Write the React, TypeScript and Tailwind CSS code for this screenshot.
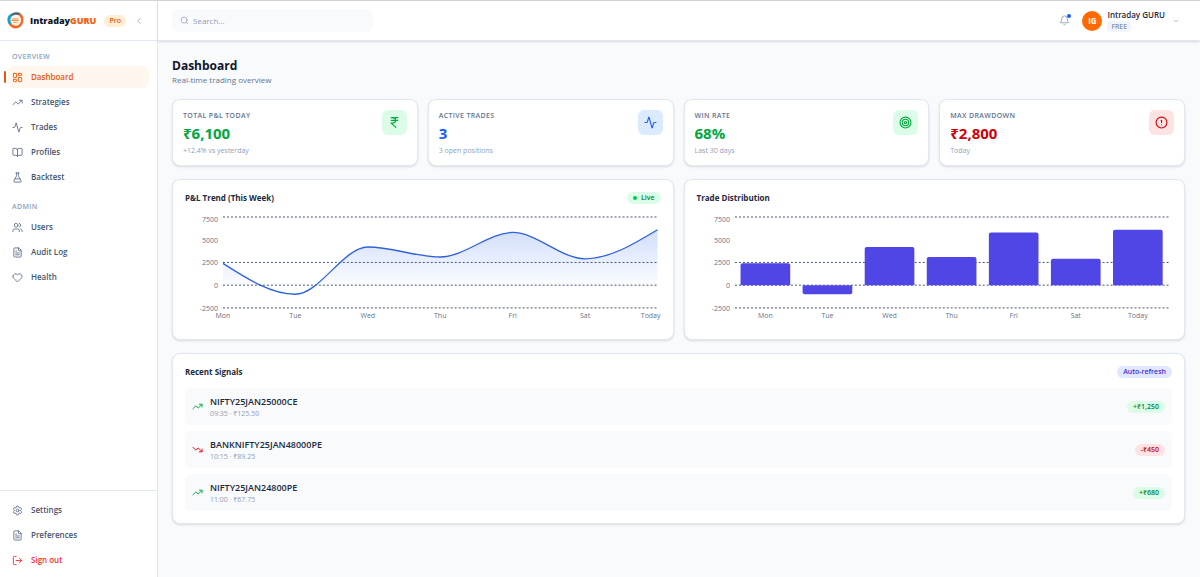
import { useId } from "react";
import type { LucideIcon } from "lucide-react";
import {
  Activity,
  Bell,
  BookOpen,
  ChevronDown,
  ChevronLeft,
  CircleAlert,
  FileText,
  FlaskConical,
  Heart,
  IndianRupee,
  LayoutDashboard,
  LogOut,
  Search,
  Settings,
  Target,
  TrendingDown,
  TrendingUp,
  Users,
} from "lucide-react";

type NavItem = { label: string; icon: LucideIcon; active?: boolean; danger?: boolean };

const overview: NavItem[] = [
  { label: "Dashboard", icon: LayoutDashboard, active: true },
  { label: "Strategies", icon: TrendingUp },
  { label: "Trades", icon: Activity },
  { label: "Profiles", icon: BookOpen },
  { label: "Backtest", icon: FlaskConical },
];

const admin: NavItem[] = [
  { label: "Users", icon: Users },
  { label: "Audit Log", icon: FileText },
  { label: "Health", icon: Heart },
];

const account: NavItem[] = [
  { label: "Settings", icon: Settings },
  { label: "Preferences", icon: FileText },
  { label: "Sign out", icon: LogOut, danger: true },
];

const stats = [
  { label: "TOTAL P&L TODAY", value: "₹6,100", note: "+12.4% vs yesterday", icon: IndianRupee, color: "text-green-600", box: "bg-green-100 text-green-600" },
  { label: "ACTIVE TRADES", value: "3", note: "3 open positions", icon: Activity, color: "text-blue-600", box: "bg-blue-100 text-blue-600" },
  { label: "WIN RATE", value: "68%", note: "Last 30 days", icon: Target, color: "text-green-600", box: "bg-green-100 text-green-600" },
  { label: "MAX DRAWDOWN", value: "₹2,800", note: "Today", icon: CircleAlert, color: "text-[#d00008]", box: "bg-red-100 text-[#d00008]" },
];

const week = [
  { day: "Mon", pnl: 2400 },
  { day: "Tue", pnl: -1000 },
  { day: "Wed", pnl: 4200 },
  { day: "Thu", pnl: 3100 },
  { day: "Fri", pnl: 5800 },
  { day: "Sat", pnl: 2900 },
  { day: "Today", pnl: 6100 },
];

const signals = [
  { symbol: "NIFTY25JAN25000CE", time: "09:35", price: "₹125.50", pnl: "+₹1,250", up: true },
  { symbol: "BANKNIFTY25JAN48000PE", time: "10:15", price: "₹89.25", pnl: "-₹450", up: false },
  { symbol: "NIFTY25JAN24800PE", time: "11:00", price: "₹67.75", pnl: "+₹680", up: true },
];

// chart geometry, shared by both charts
const W = 476;
const H = 117;
const LEFT = 38;
const RIGHT = 473;
const TOP = 7;
const BOTTOM = 98;
const y = (v: number) => BOTTOM - ((v + 2500) / 10000) * (BOTTOM - TOP);

// monotone cubic through all points
function monotonePath(pts: number[][]) {
  const n = pts.length;
  const slope = pts.slice(1).map((p, i) => (p[1] - pts[i][1]) / (p[0] - pts[i][0]));
  const t: number[] = [];
  for (let i = 1; i < n - 1; i++) {
    const a = slope[i - 1];
    const b = slope[i];
    t[i] = a * b <= 0 ? 0 : Math.sign(a) * Math.min(Math.abs(a), Math.abs(b), Math.abs(a + b) / 4) * 2;
  }
  t[0] = (3 * slope[0] - t[1]) / 2;
  t[n - 1] = (3 * slope[n - 2] - t[n - 2]) / 2;
  let d = `M${pts[0][0]},${pts[0][1]}`;
  for (let i = 1; i < n; i++) {
    const [x0, y0] = pts[i - 1];
    const [x1, y1] = pts[i];
    const dx = (x1 - x0) / 3;
    d += `C${x0 + dx},${y0 + dx * t[i - 1]},${x1 - dx},${y1 - dx * t[i]},${x1},${y1}`;
  }
  return d;
}

function Logo() {
  return (
    <svg viewBox="0 0 34 34" className="size-[17px] shrink-0" aria-hidden="true">
      <circle cx="17" cy="17" r="12" fill="#fff1e4" />
      <path d="M10 3C3 5 0 11 1 17c0 5 3 9 6 11l2-5C6 19 6 12 10 8Z" fill="#1ba3c6" />
      <path d="M9 4C13 0 21 0 27 2l-2 5C20 4 13 5 9 9Z" fill="#4d6470" />
      <path d="M25 2c5 2 8 7 8 13 0 10-7 18-16 18-5 0-9-3-12-7l3-4c5 7 14 7 18 1 4-5 3-11-2-16Z" fill="#f26a21" />
      <path d="M10 14h13M9 17h14" stroke="#f08a4b" strokeWidth="2" />
      <path d="M12 21h9" stroke="#f4a873" strokeWidth="2" />
    </svg>
  );
}

function NavLink({ item }: { item: NavItem }) {
  const Icon = item.icon;
  const tone = item.active
    ? "bg-orange-50 text-[#ea580c]"
    : item.danger
      ? "text-red-500"
      : "text-slate-600 hover:bg-slate-50";
  const iconTone = item.active || item.danger ? "" : "text-slate-500";
  return (
    <a href="#" className={`relative flex h-[22px] items-center gap-2 rounded-md px-1 text-[8px] font-semibold ${tone}`}>
      {item.active && <span className="absolute -left-1 h-3 w-0.5 rounded-full bg-[#ea580c]" />}
      <Icon className={`size-[11px] ${iconTone}`} strokeWidth={2} />
      {item.label}
    </a>
  );
}

function Sidebar() {
  return (
    <aside className="flex w-[158px] shrink-0 flex-col border-r border-slate-200 bg-white">
      <div className="flex h-10 items-center border-b border-slate-200 px-[7px]">
        <Logo />
        <span className="ml-[6px] text-[9px] font-extrabold text-slate-900">
          Intraday<span className="text-[#f06010]">GURU</span>
        </span>
        <span className="ml-2 rounded-full bg-orange-100 px-[5px] text-[7px] leading-[12px] font-semibold text-[#ea580c]">Pro</span>
        <button aria-label="Collapse sidebar" className="ml-auto pr-[6px] text-slate-400">
          <ChevronLeft className="size-[10px]" />
        </button>
      </div>
      <nav className="flex flex-1 flex-col gap-[3px] px-2 pt-[10px]">
        <h2 className="px-1 text-[7px] leading-[12px] font-semibold tracking-wider text-slate-400">OVERVIEW</h2>
        {overview.map((item) => (
          <NavLink key={item.label} item={item} />
        ))}
        <h2 className="mt-[10px] px-1 text-[7px] leading-[12px] font-semibold tracking-wider text-slate-400">ADMIN</h2>
        {admin.map((item) => (
          <NavLink key={item.label} item={item} />
        ))}
      </nav>
      <nav className="flex flex-col gap-[3px] border-t border-slate-200 px-2 pt-2 pb-[6px]">
        {account.map((item) => (
          <NavLink key={item.label} item={item} />
        ))}
      </nav>
    </aside>
  );
}

function Header() {
  return (
    <header className="flex h-10 shrink-0 items-center border-b border-slate-200 bg-white pr-[20px] pl-[14px] shadow-sm">
      <label className="flex h-[23px] w-[201px] items-center gap-[4px] rounded-md bg-slate-50 px-2">
        <Search className="size-[9px] shrink-0 text-slate-400" />
        <input
          type="search"
          aria-label="Search"
          placeholder="Search..."
          className="w-full bg-transparent text-[8px] outline-none placeholder:text-slate-400"
        />
      </label>
      <button aria-label="Notifications" className="relative ml-auto text-slate-400">
        <Bell className="size-[11px]" />
        <span className="absolute -top-px -right-px size-1 rounded-full bg-blue-600" />
      </button>
      <button className="ml-3 flex items-center text-left">
        <span className="grid size-5 place-items-center rounded-full bg-orange-500 text-[8px] font-bold text-white">IG</span>
        <span className="ml-[5px] flex flex-col items-start">
          <span className="text-[8px] leading-[12px] font-semibold text-slate-800">Intraday GURU</span>
          <span className="rounded bg-slate-100 px-1 text-[7px] leading-[11px] font-medium text-slate-500">FREE</span>
        </span>
        <ChevronDown className="ml-[7px] size-[8px] text-slate-400" />
      </button>
    </header>
  );
}

function Grid() {
  return (
    <>
      {[7500, 2500, 0, -2500].map((v) => (
        <line key={v} x1={LEFT} x2={RIGHT} y1={y(v)} y2={y(v)} stroke="#475569" strokeWidth="1" strokeDasharray="2 2" />
      ))}
      {[7500, 5000, 2500, 0, -2500].map((v) => (
        <text key={v} x={LEFT - 5} y={y(v) + (v === 7500 ? 5 : 3)} textAnchor="end" fontSize="7" fill="#64748b">
          {v}
        </text>
      ))}
    </>
  );
}

function TrendChart() {
  const fill = useId();
  const step = (RIGHT - LEFT) / (week.length - 1);
  const line = monotonePath(week.map((d, i) => [LEFT + i * step, y(d.pnl)]));
  return (
    <svg viewBox={`0 0 ${W} ${H}`} className="block w-full overflow-visible" role="img" aria-label="P&L Trend">
      <defs>
        <linearGradient id={fill} x1="0" y1="0" x2="0" y2="1">
          <stop offset="5%" stopColor="#2563eb" stopOpacity="0.2" />
          <stop offset="95%" stopColor="#2563eb" stopOpacity="0" />
        </linearGradient>
      </defs>
      <Grid />
      <path d={`${line}L${RIGHT},${y(0)}L${LEFT},${y(0)}Z`} fill={`url(#${fill})`} />
      <path d={line} fill="none" stroke="#2f62d9" strokeWidth="1.3" />
      {week.map((d, i) => (
        <text
          key={d.day}
          x={d.day === "Today" ? W : LEFT + i * step}
          y={BOTTOM + 10}
          textAnchor={d.day === "Today" ? "end" : "middle"}
          fontSize="7"
          fill="#64748b"
        >
          {d.day}
        </text>
      ))}
    </svg>
  );
}

function BarChart() {
  const band = (RIGHT - LEFT) / week.length;
  return (
    <svg viewBox={`0 0 ${W} ${H}`} className="block w-full overflow-visible" role="img" aria-label="Trade Distribution">
      <Grid />
      {week.map((d, i) => {
        const x = LEFT + i * band + band * 0.09;
        const w = band * 0.8;
        const x2 = x + w;
        const base = y(0);
        const end = y(d.pnl);
        // only the corners away from the zero line are rounded
        const r = d.pnl > 0 ? 2 : -2;
        return (
          <g key={d.day}>
            <path
              d={`M${x},${base}V${end + r}Q${x},${end} ${x + 2},${end}H${x2 - 2}Q${x2},${end} ${x2},${end + r}V${base}Z`}
              fill="#4f46e5"
            />
            <text x={x + w / 2} y={BOTTOM + 10} textAnchor="middle" fontSize="7" fill="#64748b">
              {d.day}
            </text>
          </g>
        );
      })}
    </svg>
  );
}

const card = "rounded-lg border border-slate-200 bg-white shadow-sm";
const pill = "rounded-full px-[6px] text-[7px] leading-[12px] font-semibold";

export default function App() {
  return (
    <div className="flex min-h-screen border-t border-zinc-300 bg-slate-50 font-['Open_Sans','Noto_Sans',sans-serif] text-slate-800">
      <Sidebar />
      <div className="flex min-w-0 flex-1 flex-col">
        <Header />
        <main className="flex flex-col gap-[13px] pt-[17px] pr-[15px] pb-6 pl-[14px]">
          <div>
            <h1 className="text-[12px] leading-[16px] font-bold text-slate-900">Dashboard</h1>
            <p className="text-[8px] leading-[12px] text-slate-500">Real-time trading overview</p>
          </div>

          <section className="grid grid-cols-4 gap-[10px]">
            {stats.map((s) => (
              <div key={s.label} className={`flex items-start justify-between px-[10px] pt-[10px] pb-2 ${card}`}>
                <div>
                  <p className="text-[7px] leading-[12px] font-semibold tracking-wider text-slate-500">{s.label}</p>
                  <p className={`text-[15px] leading-[23px] font-bold ${s.color}`}>{s.value}</p>
                  <p className="text-[7px] leading-[12px] text-slate-400">{s.note}</p>
                </div>
                <span className={`grid size-[25px] place-items-center rounded-md ${s.box}`}>
                  <s.icon className="size-[13px]" />
                </span>
              </div>
            ))}
          </section>

          <section className="grid grid-cols-2 gap-[10px]">
            <div className={`p-3 ${card}`}>
              <div className="mb-[6px] flex h-3 items-center justify-between">
                <h2 className="text-[8px] font-bold">P&amp;L Trend (This Week)</h2>
                <span className={`flex items-center gap-1 bg-green-100 text-green-700 ${pill}`}>
                  <span className="size-1 rounded-full bg-green-500" />
                  Live
                </span>
              </div>
              <TrendChart />
            </div>
            <div className={`p-3 ${card}`}>
              <div className="mb-[6px] flex h-3 items-center justify-between">
                <h2 className="text-[8px] font-bold">Trade Distribution</h2>
              </div>
              <BarChart />
            </div>
          </section>

          <section className={`p-3 ${card}`}>
            <div className="mb-[10px] flex h-3 items-center justify-between">
              <h2 className="text-[8px] font-bold">Recent Signals</h2>
              <span className={`bg-indigo-100 text-indigo-700 ${pill}`}>Auto-refresh</span>
            </div>
            <ul className="flex flex-col gap-[6px]">
              {signals.map((s) => (
                <li key={s.symbol} className="flex h-[37px] items-center rounded-md bg-slate-50 px-[7px] pt-px">
                  {s.up ? <TrendingUp className="size-[11px] text-green-600" /> : <TrendingDown className="size-[11px] text-red-600" />}
                  <div className="ml-[7px] pt-[2px]">
                    <p className="text-[9px] leading-[12px] font-semibold">{s.symbol}</p>
                    <p className="text-[7px] leading-[12px] text-slate-400">
                      {s.time} · {s.price}
                    </p>
                  </div>
                  <span className={`ml-auto ${pill} ${s.up ? "bg-green-100 text-green-700" : "bg-red-100 text-red-700"}`}>{s.pnl}</span>
                </li>
              ))}
            </ul>
          </section>
        </main>
      </div>
    </div>
  );
}
